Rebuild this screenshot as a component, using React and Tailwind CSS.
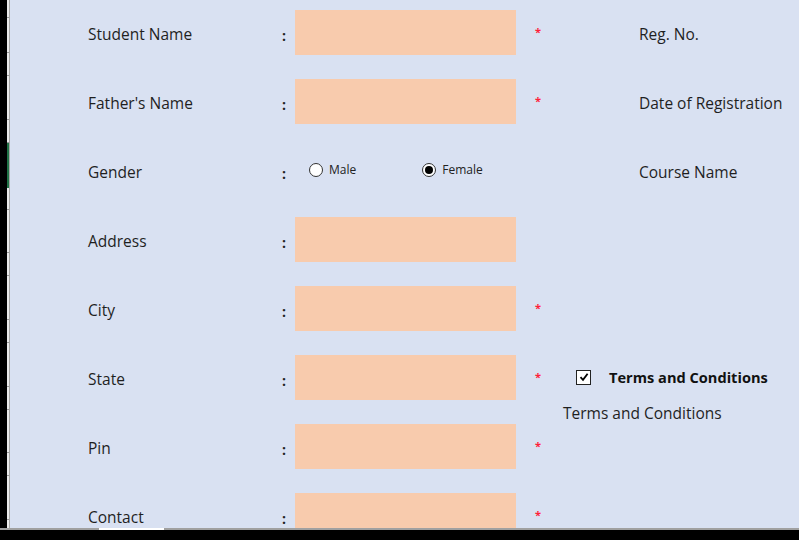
import React from 'react';

const rows = [
  { label: 'Student Name', type: 'field', star: true, right: 'Reg. No.' },
  { label: "Father's Name", type: 'field', star: true, right: 'Date of Registration' },
  { label: 'Gender', type: 'radio', star: false, right: 'Course Name' },
  { label: 'Address', type: 'field', star: false },
  { label: 'City', type: 'field', star: true },
  { label: 'State', type: 'field', star: true, terms: true },
  { label: 'Pin', type: 'field', star: true },
  { label: 'Contact', type: 'field', star: true },
];

// row header ticks along the left edge (heights between ticks)
const tickGaps = [18, 35, 23, 44, 23, 44, 23, 43, 23, 44, 23, 44, 23, 43, 23, 44];

const Radio = ({ checked, label }) => (
  <div className="flex items-center gap-[6px]">
    <span className="w-[14px] h-[14px] rounded-full border border-[#333] bg-white flex items-center justify-center">
      {checked && <span className="w-[8px] h-[8px] rounded-full bg-black" />}
    </span>
    <span className="text-[12px] text-[#222]">{label}</span>
  </div>
);

const App = () => {
  return (
    <div className="w-[799px] h-[540px] bg-black flex flex-col overflow-hidden" style={{ fontFamily: '"Open Sans", sans-serif' }}>
      <div className="flex h-[528px]">
        <div className="w-[7px] bg-black" />
        {/* row header strip */}
        <div className="w-[2px] bg-[#ececec] flex flex-col relative">
          {tickGaps.map((g, i) => (
            <div key={i} className="border-b border-[#9a9a9a] shrink-0" style={{ height: g }} />
          ))}
          <div className="absolute left-0 top-[143px] w-[2px] h-[45px] bg-[#217346]" />
        </div>
        <div className="w-[1px] bg-[#a8a8a8]" />
        <div className="flex-1 bg-[#d9e1f2] relative overflow-hidden">
          <div className="flex flex-col gap-[24px] pt-[10px]">
            {rows.map((r, i) => (
              <div key={i} className="flex items-center h-[45px] shrink-0 text-[15.5px] text-[#1f1f1f]">
                <div className="w-[78px]" />
                <div className="w-[194px] mt-[5px]">{r.label}</div>
                <div className="w-[13px] font-bold text-[14px] mt-[5px]">:</div>
                {r.type === 'field' ? (
                  <div className="w-[221px] h-[45px] bg-[#f8cbad]" />
                ) : (
                  <div className="w-[221px] flex items-center pl-[14px] gap-[66px] -mt-[2px]">
                    <Radio label="Male" />
                    <Radio checked label="Female" />
                  </div>
                )}
                <div className="w-[19px]" />
                <div className={`${r.terms ? 'w-[41px]' : 'w-[104px]'} text-[#ff1f3a] text-[11px] font-bold -mt-[1px]`}>{r.star ? '*' : ''}</div>
                {r.terms ? (
                  <div className="flex items-center relative">
                    <span className="w-[15px] h-[15px] border border-[#222] bg-white flex items-center justify-center">
                      <svg width="10" height="10" viewBox="0 0 10 10">
                        <path d="M1.5 5.2 L4 7.8 L8.6 1.8" fill="none" stroke="#000" strokeWidth="1.8" />
                      </svg>
                    </span>
                    <span className="ml-[18px] font-bold text-[14.6px] text-[#111] mt-[1px]">Terms and Conditions</span>
                    <span className="absolute left-[-13px] top-[36px] whitespace-nowrap">Terms and Conditions</span>
                  </div>
                ) : (
                  <div className="whitespace-nowrap mt-[5px]">{r.right || ''}</div>
                )}
              </div>
            ))}
          </div>
        </div>
      </div>
      <div className="h-[2px] bg-[#a0a0a0] flex">
        <div className="w-[99px]" />
        <div className="w-[65px] bg-white" />
      </div>
    </div>
  );
};

export default App;
